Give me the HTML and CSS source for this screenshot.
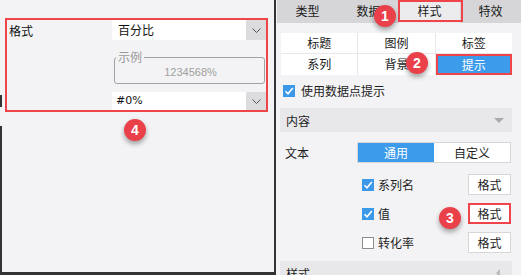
FILE: index.html
```html
<!DOCTYPE html>
<html lang="zh">
<head>
<meta charset="utf-8">
<link rel="stylesheet" href="styles.css">
</head>
<body>
<div class="app">
  <section class="left">
    <div class="fmt-box">
      <div class="fmt-label">格式</div>
      <div class="fmt-controls">
        <div class="select">
          <span class="select-val">百分比</span>
          <span class="select-arrow"><svg width="9" height="5" viewBox="0 0 9 5"><polyline points="0.5,0.5 4.5,4.5 8.5,0.5" fill="none" stroke="#555" stroke-width="1"/></svg></span>
        </div>
        <div class="example">
          <span class="legend">示例</span>
          <span class="example-val">1234568%</span>
        </div>
        <div class="select select-sm">
          <span class="select-val mono">#0%</span>
          <span class="select-arrow"><svg width="9" height="5" viewBox="0 0 9 5"><polyline points="0.5,0.5 4.5,4.5 8.5,0.5" fill="none" stroke="#555" stroke-width="1"/></svg></span>
        </div>
      </div>
    </div>
  </section>

  <section class="right">
    <nav class="tabs">
      <span class="tab">类型</span>
      <span class="tab">数据</span>
      <span class="tab tab-active">样式</span>
      <span class="tab">特效</span>
    </nav>

    <div class="subtabs">
      <span class="subtab">标题</span>
      <span class="subtab">图例</span>
      <span class="subtab">标签</span>
      <span class="subtab">系列</span>
      <span class="subtab">背景</span>
      <span class="subtab subtab-active">提示</span>
    </div>

    <div class="check-row">
      <span class="cb cb-on"><svg width="12" height="12" viewBox="0 0 12 12"><polyline points="2.5,6.2 5,8.7 9.8,3" fill="none" stroke="#fff" stroke-width="1.6"/></svg></span>
      <span class="check-text">使用数据点提示</span>
    </div>

    <div class="section-head">
      <span>内容</span>
      <span class="tri-down"></span>
    </div>

    <div class="text-row">
      <span class="text-label">文本</span>
      <div class="toggle">
        <span class="toggle-opt toggle-on">通用</span>
        <span class="toggle-opt">自定义</span>
      </div>
    </div>

    <div class="items">
      <div class="item">
        <span class="cb cb-on"><svg width="12" height="12" viewBox="0 0 12 12"><polyline points="2.5,6.2 5,8.7 9.8,3" fill="none" stroke="#fff" stroke-width="1.6"/></svg></span>
        <span class="item-text">系列名</span>
        <span class="btn">格式</span>
      </div>
      <div class="item">
        <span class="cb cb-on"><svg width="12" height="12" viewBox="0 0 12 12"><polyline points="2.5,6.2 5,8.7 9.8,3" fill="none" stroke="#fff" stroke-width="1.6"/></svg></span>
        <span class="item-text">值</span>
        <span class="btn btn-marked">格式</span>
      </div>
      <div class="item">
        <span class="cb"></span>
        <span class="item-text">转化率</span>
        <span class="btn">格式</span>
      </div>
    </div>

    <div class="section-head section-last">
      <span>样式</span>
      <span class="tri-left"></span>
    </div>
  </section>

  <span class="badge b1">1</span>
  <span class="badge b2">2</span>
  <span class="badge b3">3</span>
  <span class="badge b4">4</span>
</div>
</body>
</html>
```

FILE: styles.css
```css
* { box-sizing: border-box; }
html, body { margin: 0; padding: 0; }
body {
  background: #f3f3f5;
  font-family: "Noto Sans CJK SC", "Noto Sans", sans-serif;
  font-size: 12px;
  color: #1d1d1d;
}
.app {
  position: relative;
  display: flex;
  width: 521px;
  height: 275px;
  overflow: hidden;
}

/* ---------- left panel ---------- */
.left {
  width: 276px;
  height: 275px;
  flex: none;
  border-right: 2px solid #333;
  border-bottom: 3px solid #333;
  padding: 18px 0 0 5px;
  background-color: #f3f3f5;
  background-image: linear-gradient(to bottom, #333 0 12px, transparent 12px 31px, #333 31px 180px);
  background-repeat: no-repeat;
  background-size: 2px 180px;
  background-position: 0 95px;
}
.fmt-box {
  display: flex;
  width: 263px;
  height: 94px;
  border: 2px solid #f0444b;
}
.fmt-label {
  width: 105px;
  padding: 3px 0 0 2px;
  line-height: 16px;
  font-size: 12px;
  color: #111;
}
.fmt-controls {
  width: 154px;
  display: flex;
  flex-direction: column;
}
.fmt-controls > * { flex-shrink: 0; }
.select {
  display: flex;
  height: 20px;
  background: #fff;
}
.select-sm { height: 18px; margin-top: 8px; }
.select-val {
  flex: 1;
  padding-left: 6px;
  line-height: 20px;
  color: #111;
}
.select-sm .select-val { line-height: 18px; padding-left: 4px; }
.mono { font-family: "DejaVu Sans", sans-serif; font-size: 11px; }
.select-arrow {
  width: 20px;
  background: #dcdcdf;
  display: flex;
  align-items: center;
  justify-content: center;
}
.example {
  position: relative;
  margin: 17px 1px 0 2px;
  height: 27px;
  border: 1px solid #a2a2a2;
  border-radius: 3px;
  text-align: center;
}
.legend {
  position: absolute;
  top: -9px;
  left: 1px;
  padding: 0 2px;
  background: #f3f3f5;
  color: #9a9a9a;
  font-size: 12px;
  line-height: 16px;
}
.example-val {
  display: block;
  padding-top: 5px;
  line-height: 18px;
  font-family: "Liberation Sans", sans-serif;
  font-size: 11px;
  color: #a0a0a0;
  padding-left: 2px;
}

/* ---------- right panel ---------- */
.right {
  flex: 1;
  margin-left: 1px;
  display: flex;
  flex-direction: column;
  min-height: 0;
}
.right > * { flex-shrink: 0; }
.tabs {
  display: grid;
  grid-template-columns: repeat(4, 1fr);
  height: 23px;
  background: #d6d6d9;
}
.tab {
  position: relative;
  text-align: center;
  line-height: 22px;
  font-size: 12px;
  color: #1a1a1a;
}
.tab-active { background: #ececee; }
.tab-active::after {
  content: "";
  position: absolute;
  left: -1px;
  right: -3px;
  top: 0;
  bottom: 1px;
  border: 2px solid #f0444b;
}
.subtabs {
  display: grid;
  grid-template-columns: repeat(3, 1fr);
  grid-template-rows: 20px 21px;
  gap: 1px;
  margin: 10px 9px 0 4px;
  background: #e8e8ea;
}
.subtab {
  background: #fff;
  text-align: center;
  line-height: 20px;
  color: #1a1a1a;
}
.subtab-active {
  background: #3d9bec;
  color: #fff;
  line-height: 21px;
  box-shadow: inset 0 0 0 2px #f0444b;
}
.check-row {
  display: flex;
  align-items: center;
  margin: 9px 0 0 6px;
  height: 14px;
}
.cb {
  width: 12px;
  height: 12px;
  flex: none;
  background: #fff;
  border: 1px solid #8d8d8d;
  display: flex;
}
.cb-on { background: #3c98e8; border-color: #3c98e8; }
.cb svg { margin: -1px; }
.check-text { margin-left: 6px; line-height: 14px; }

.section-head {
  display: flex;
  align-items: center;
  justify-content: space-between;
  margin: 10px 9px 0 3px;
  height: 24px;
  padding: 0 8px 0 6px;
  background: #e8e8ea;
}
.tri-down {
  width: 0; height: 0;
  border-left: 5px solid transparent;
  border-right: 5px solid transparent;
  border-top: 5px solid #aaa;
  margin-top: 1px;
}
.tri-left {
  width: 0; height: 0;
  border-top: 4px solid transparent;
  border-bottom: 4px solid transparent;
  border-right: 4px solid #bbb;
  margin-right: 4px;
}
.section-last { margin-top: 8px; }

.text-row {
  display: flex;
  align-items: center;
  margin: 10px 10px 0 8px;
}
.text-label { width: 72px; }
.toggle {
  display: grid;
  grid-template-columns: 1fr 1fr;
  width: 154px;
  height: 21px;
  border: 1px solid #d6d6d6;
  background: #fff;
}
.toggle-opt { text-align: center; line-height: 19px; }
.toggle-on { background: #3d9bec; color: #fff; }

.items {
  display: flex;
  flex-direction: column;
  gap: 8px;
  margin: 11px 10px 0 85px;
}
.item {
  display: flex;
  align-items: center;
  height: 21px;
}
.item-text { flex: 1; margin-left: 4px; line-height: 16px; }
.btn {
  width: 43px;
  height: 21px;
  background: #fff;
  border: 1px solid #d6d6d6;
  text-align: center;
  line-height: 19px;
}
.btn-marked { border: 2px solid #f0444b; line-height: 17px; }

/* ---------- badges ---------- */
.badge {
  position: absolute;
  width: 22px;
  height: 22px;
  border-radius: 50%;
  background: #e9404a;
  color: #fff;
  font-family: "Liberation Sans", sans-serif;
  font-weight: bold;
  font-size: 14px;
  line-height: 22px;
  text-align: center;
  box-shadow: 0 3px 5px rgba(0,0,0,0.35);
}
.b1 { left: 374px; top: 5px; }
.b2 { left: 406px; top: 52px; }
.b3 { left: 439px; top: 207px; }
.b4 { left: 124px; top: 119px; }
```
